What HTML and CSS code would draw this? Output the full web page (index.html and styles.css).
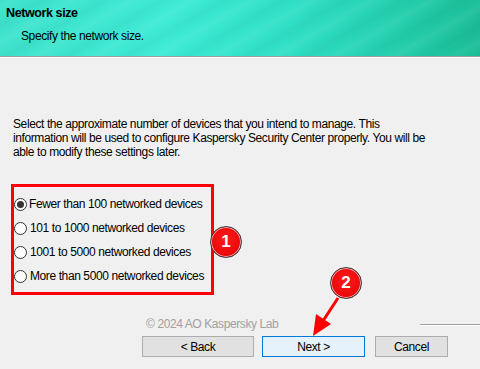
FILE: index.html
```html
<!DOCTYPE html>
<html lang="en">

<head>
    <meta charset="UTF-8" />
    <title>Network size</title>
    <link rel="stylesheet" href="styles.css">
</head>

<body>
    <!-- Banner -->
    <div class="banner">
        <div class="banner-title">Network size</div>
        <div class="banner-sub">Specify the network size.</div>
    </div>

    <!-- Content -->
    <div class="content">
        <p class="intro">Select the approximate number of devices that you intend to manage. This<br>
            information will be used to configure Kaspersky Security Center properly. You will be<br>
            able to modify these settings later.</p>

        <div class="options">
            <label class="option"><span class="radio checked"></span>Fewer than 100 networked devices</label>
            <label class="option"><span class="radio"></span>101 to 1000 networked devices</label>
            <label class="option"><span class="radio"></span>1001 to 5000 networked devices</label>
            <label class="option"><span class="radio"></span>More than 5000 networked devices</label>
        </div>
    </div>

    <!-- Footer -->
    <div class="footer">
        <div class="copyright-row">
            <span class="copyright">© 2024 AO Kaspersky Lab</span>
            <span class="etched"></span>
        </div>
        <div class="buttons">
            <button class="btn">&lt; Back</button>
            <button class="btn btn-default">Next &gt;</button>
            <button class="btn btn-cancel">Cancel</button>
        </div>
    </div>

    <!-- Annotations -->
    <div class="badge badge-one">1</div>
    <div class="badge badge-two">2</div>
    <svg class="arrow" width="480" height="369" viewBox="0 0 480 369">
        <line x1="338" y1="298" x2="321" y2="324" stroke="#ff0000" stroke-width="3" />
        <polygon points="313,336 331,324 316,314" fill="#ff0000" />
    </svg>
</body>

</html>
```

FILE: styles.css
```css
html,
body {
    margin: 0;
    padding: 0;
    width: 480px;
    height: 369px;
    overflow: hidden;
    background: #f0f0f0;
    font-family: 'Liberation Sans', Arial, sans-serif;
    font-size: 12px;
    letter-spacing: -0.4px;
    color: #000;
    position: relative;
}

/* Banner */
.banner {
    height: 57px;
    box-sizing: border-box;
    padding: 6px 0 0 6px;
    background:
        repeating-linear-gradient(150deg, rgba(255, 255, 255, 0) 0px, rgba(255, 255, 255, 0.06) 6px, rgba(255, 255, 255, 0) 14px, rgba(0, 0, 0, 0.03) 22px, rgba(255, 255, 255, 0) 30px),
        linear-gradient(100deg, #3fe2cc 0%, #3debd5 35%, #30e0c6 60%, #24cfae 82%, #1bbc96 100%);
    border-bottom: 1px solid #a0a0a0;
    box-shadow: 0 1px 0 #ffffff;
}

.banner-title {
    font-weight: bold;
    font-size: 12.5px;
    line-height: 15px;
}

.banner-sub {
    margin: 8px 0 0 15px;
    line-height: 15px;
}

/* Content */
.content {
    padding: 60px 0 0 13px;
}

.intro {
    margin: 0;
    line-height: 14px;
    white-space: nowrap;
}

.options {
    margin: 25px 0 0 -2px;
    width: 203px;
    height: 111px;
    box-sizing: border-box;
    border: 3px solid #ff0000;
    padding: 5px 0 0 0;
}

.option {
    display: flex;
    align-items: center;
    height: 24px;
    white-space: nowrap;
}

.radio {
    width: 13px;
    height: 13px;
    box-sizing: border-box;
    border: 1px solid #333;
    border-radius: 50%;
    background: #fff;
    margin-right: 3px;
    display: flex;
    justify-content: center;
    align-items: center;
    flex-shrink: 0;
}

.radio.checked {
    margin-right: 2px;
}

.radio.checked::after {
    content: '';
    width: 7px;
    height: 7px;
    border-radius: 50%;
    background: #333;
}

/* Footer */
.footer {
    padding: 22px 0 0 0;
}

.copyright-row {
    display: flex;
    align-items: center;
    height: 14px;
}

.copyright {
    margin-left: 146px;
    color: #a0a0a0;
}

.etched {
    margin-left: auto;
    width: 60px;
    height: 1px;
    background: #a0a0a0;
    box-shadow: 0 1px 0 #fff;
}

.buttons {
    display: flex;
    margin: 5px 0 0 142px;
}

.btn {
    height: 21px;
    box-sizing: border-box;
    border: 1px solid #adadad;
    background: #e1e1e1;
    font-family: inherit;
    font-size: 12px;
    letter-spacing: inherit;
    color: #000;
    padding: 0;
    width: 112px;
}

.btn-default {
    margin-left: 8px;
    width: 103px;
    border: 1px solid #0078d7;
    background: #e5f1fb;
}

.btn-cancel {
    margin-left: 10px;
    width: 73px;
}

/* Annotations */
.badge {
    position: absolute;
    width: 32px;
    height: 32px;
    box-sizing: border-box;
    border-radius: 50%;
    background: radial-gradient(circle at 50% 40%, #ff1a1a, #e00000);
    border: 1.5px solid #3a3a3a;
    box-shadow: inset 0 0 0 1px #ffb0b0;
    color: #fff;
    font-weight: bold;
    font-size: 17px;
    letter-spacing: 0;
    display: flex;
    justify-content: center;
    align-items: center;
}

.badge-one {
    left: 210px;
    top: 226px;
}

.badge-two {
    left: 330px;
    top: 267px;
}

.arrow {
    position: absolute;
    left: 0;
    top: 0;
    pointer-events: none;
}
```
